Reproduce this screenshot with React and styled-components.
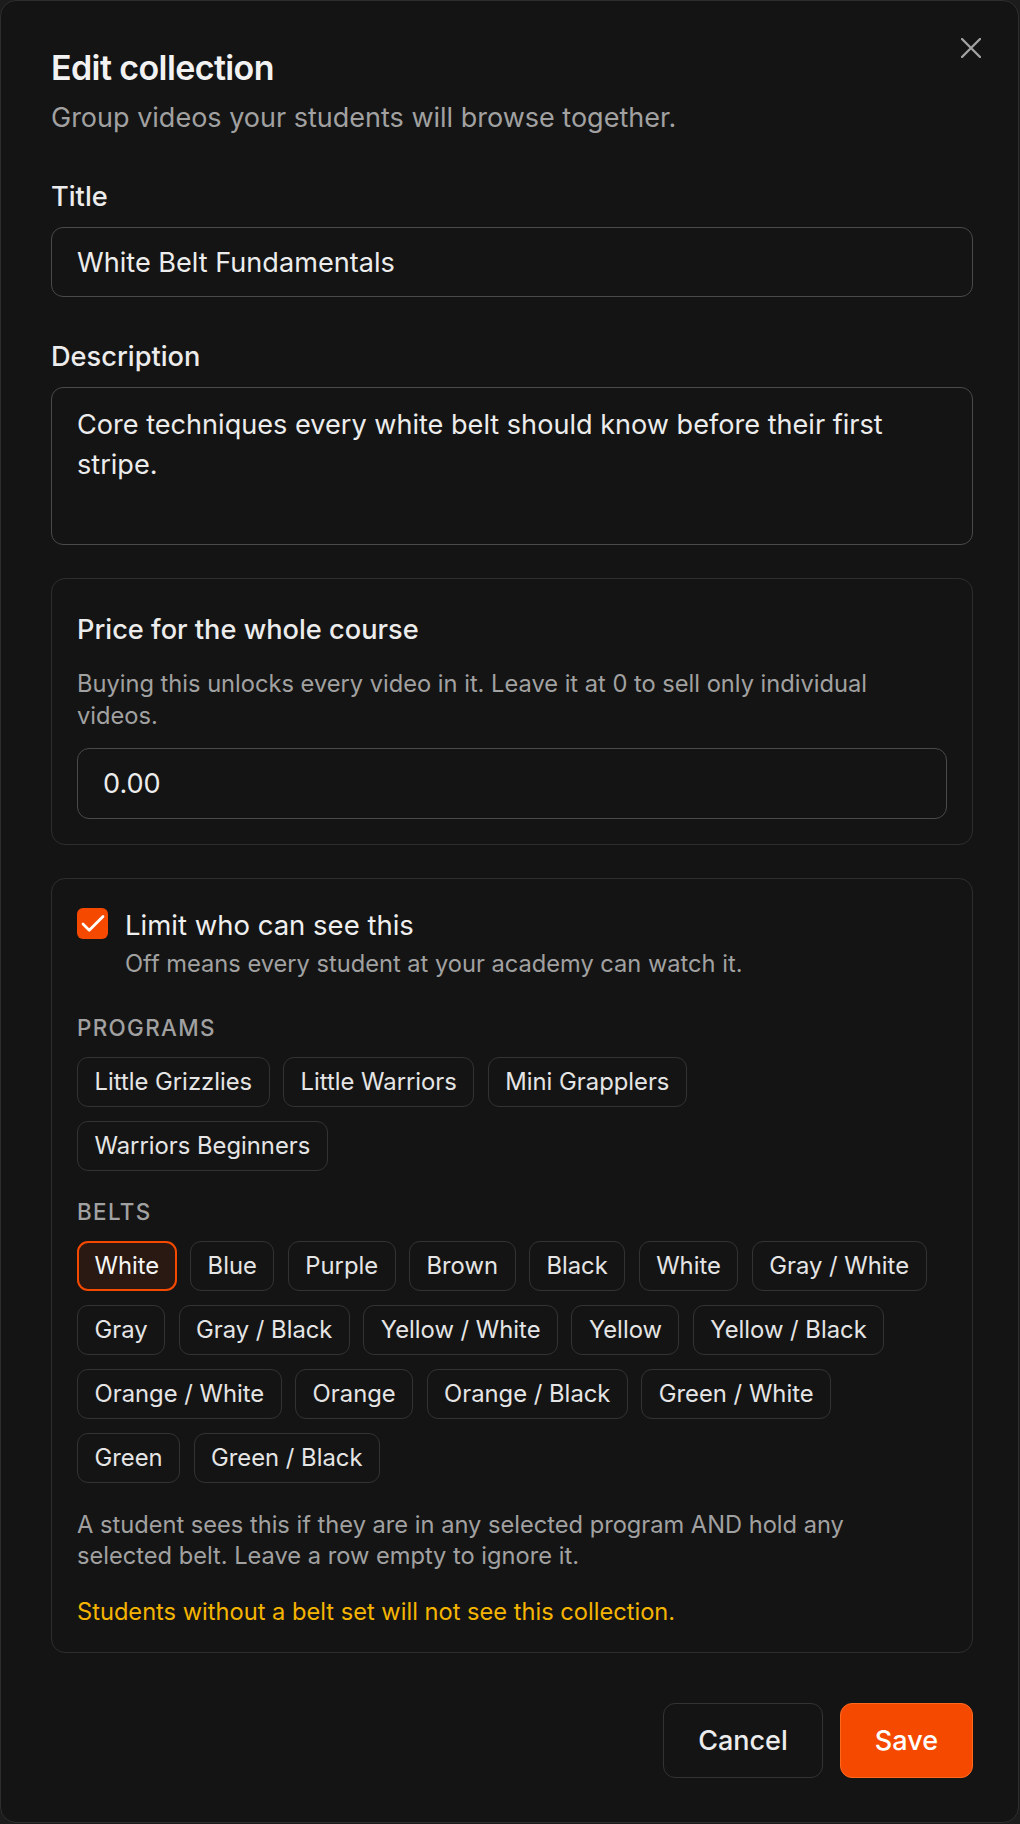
import React from 'react';
import styled, { createGlobalStyle, css } from 'styled-components';

const GlobalStyle = createGlobalStyle`
  html, body {
    margin: 0;
    padding: 0;
    background: #1c1c1c;
  }
  body {
    font-family: Inter, "Noto Sans", "Liberation Sans", sans-serif;
    -webkit-font-smoothing: antialiased;
  }
  * {
    box-sizing: border-box;
  }
`;

const Dialog = styled.div`
  position: relative;
  width: 1019px;
  background: #141414;
  border: 1px solid #2e2e2e;
  border-radius: 16px;
  padding: 46px 45px 44px 50px;
  color: #ededed;
`;

const CloseButton = styled.button`
  position: absolute;
  top: 37px;
  right: 37px;
  width: 20px;
  height: 20px;
  padding: 0;
  border: none;
  background: none;
  color: #a3a3a3;
  cursor: pointer;
  display: flex;

  svg {
    display: block;
  }
`;

const Title = styled.h2`
  margin: 0;
  font-size: 34px;
  line-height: 41px;
  font-weight: 600;
  letter-spacing: -0.6px;
  color: #f2f2f2;
`;

const Subtitle = styled.p`
  margin: 11px 0 0;
  font-size: 27px;
  line-height: 38px;
  color: #a1a1a1;
`;

const Field = styled.div`
  display: flex;
  flex-direction: column;
  gap: 11px;
  margin-top: 41px;
`;

const Label = styled.label`
  font-size: 27.2px;
  line-height: 38px;
  font-weight: 500;
  color: #ececec;
`;

const fieldBase = css`
  width: 100%;
  background: #141414;
  border: 1px solid #4a4a4a;
  border-radius: 12px;
  color: #ececec;
  font-family: inherit;
  font-size: 27.1px;
  outline: none;
`;

const TextInput = styled.input`
  ${fieldBase}
  height: ${(p) => p.$height || 70}px;
  padding: 0 25px;
  line-height: 38px;
`;

const TextArea = styled.textarea`
  ${fieldBase}
  display: block;
  height: 158px;
  padding: 17px 25px;
  line-height: 40px;
  resize: none;
  overflow: hidden;
`;

const Panel = styled.section`
  margin-top: 33px;
  border: 1px solid #2e2e2e;
  border-radius: 14px;
  padding: ${(p) => p.$pad};
`;

const PanelTitle = styled.div`
  font-size: 27.2px;
  line-height: 38px;
  font-weight: 500;
  color: #ececec;
`;

const Help = styled.p`
  max-width: 830px;
  margin: ${(p) => p.$mt || 0}px 0 0;
  font-size: 23.65px;
  line-height: 31.5px;
  color: ${(p) => (p.$warn ? '#f5b400' : '#a1a1a1')};
`;

const CheckRow = styled.div`
  display: flex;
  align-items: flex-start;
  gap: 17px;
`;

const CheckBox = styled.span`
  flex: none;
  width: 31px;
  height: 31px;
  border-radius: 6px;
  background: #f54900;
  display: flex;
  align-items: center;
  justify-content: center;
`;

const CheckText = styled.div`
  display: flex;
  flex-direction: column;
`;

const CheckLabel = styled.div`
  font-size: 27.5px;
  line-height: 34px;
  font-weight: 400;
  color: #efefef;
`;

const GroupLabel = styled.div`
  margin-top: ${(p) => p.$mt}px;
  font-size: 22.4px;
  line-height: 30px;
  font-weight: 500;
  letter-spacing: 0.06em;
  text-transform: uppercase;
  color: #a1a1a1;
`;

const ChipWrap = styled.div`
  display: flex;
  flex-wrap: wrap;
  gap: 14px 13.4px;
  margin-top: 14px;
  max-width: 862px;
`;

const Chip = styled.button`
  height: 50px;
  padding: 0 16.5px;
  display: inline-flex;
  align-items: center;
  border: 1px solid #333333;
  border-radius: 11px;
  background: #141414;
  color: #e5e5e5;
  font-family: inherit;
  font-size: 23.8px;
  line-height: 1;
  cursor: pointer;

  ${(p) =>
    p.$selected &&
    css`
      padding: 0 15.5px;
      border: 2px solid #f54900;
      background: #2a1912;
      color: #f5f5f5;
    `}
`;

const Footer = styled.div`
  display: flex;
  justify-content: flex-end;
  gap: 17px;
  margin-top: 50px;
`;

const Button = styled.button`
  height: 75px;
  padding: 0 34px;
  border-radius: 12px;
  font-family: inherit;
  font-size: 27px;
  font-weight: 500;
  cursor: pointer;
  border: 1px solid ${(p) => (p.$primary ? '#ff6a1f' : '#333333')};
  background: ${(p) => (p.$primary ? '#f54900' : '#141414')};
  color: ${(p) => (p.$primary ? '#ffffff' : '#ececec')};
`;

const programs = ['Little Grizzlies', 'Little Warriors', 'Mini Grapplers', 'Warriors Beginners'];

const belts = [
  'White', 'Blue', 'Purple', 'Brown', 'Black', 'White', 'Gray / White',
  'Gray', 'Gray / Black', 'Yellow / White', 'Yellow', 'Yellow / Black',
  'Orange / White', 'Orange', 'Orange / Black', 'Green / White',
  'Green', 'Green / Black',
];

function XIcon() {
  return (
    <svg width="20" height="20" viewBox="0 0 20 20" fill="none" stroke="currentColor" strokeWidth="2.3" strokeLinecap="round">
      <path d="M1 1 19 19M19 1 1 19" />
    </svg>
  );
}

function CheckIcon() {
  return (
    <svg width="30" height="30" viewBox="0 0 24 24" fill="none" stroke="#fff" strokeWidth="2.2" strokeLinecap="round" strokeLinejoin="round">
      <path d="M20 6 9 17l-5-5" />
    </svg>
  );
}

export default function App() {
  return (
    <>
      <GlobalStyle />
      <Dialog>
        <CloseButton aria-label="Close">
          <XIcon />
        </CloseButton>

        <Title>Edit collection</Title>
        <Subtitle>Group videos your students will browse together.</Subtitle>

        <Field>
          <Label>Title</Label>
          <TextInput defaultValue="White Belt Fundamentals" />
        </Field>

        <Field>
          <Label>Description</Label>
          <TextArea defaultValue="Core techniques every white belt should know before their first stripe." />
        </Field>

        <Panel $pad="32px 25px 25px">
          <PanelTitle>Price for the whole course</PanelTitle>
          <Help $mt={19}>
            Buying this unlocks every video in it. Leave it at 0 to sell only individual videos.
          </Help>
          <div style={{ marginTop: 17 }}>
            <TextInput $height={71} defaultValue="0.00" />
          </div>
        </Panel>

        <Panel $pad="29px 25px 24px">
          <CheckRow>
            <CheckBox>
              <CheckIcon />
            </CheckBox>
            <CheckText>
              <CheckLabel>Limit who can see this</CheckLabel>
              <Help $mt={6}>Off means every student at your academy can watch it.</Help>
            </CheckText>
          </CheckRow>

          <GroupLabel $mt={33}>Programs</GroupLabel>
          <ChipWrap>
            {programs.map((p) => (
              <Chip key={p}>{p}</Chip>
            ))}
          </ChipWrap>

          <GroupLabel $mt={26}>Belts</GroupLabel>
          <ChipWrap>
            {belts.map((b, i) => (
              <Chip key={b + i} $selected={i === 0}>{b}</Chip>
            ))}
          </ChipWrap>

          <Help $mt={26}>
            A student sees this if they are in any selected program AND hold any selected belt. Leave a row empty to ignore it.
          </Help>
          <Help $mt={24.5} $warn>Students without a belt set will not see this collection.</Help>
        </Panel>

        <Footer>
          <Button>Cancel</Button>
          <Button $primary>Save</Button>
        </Footer>
      </Dialog>
    </>
  );
}
